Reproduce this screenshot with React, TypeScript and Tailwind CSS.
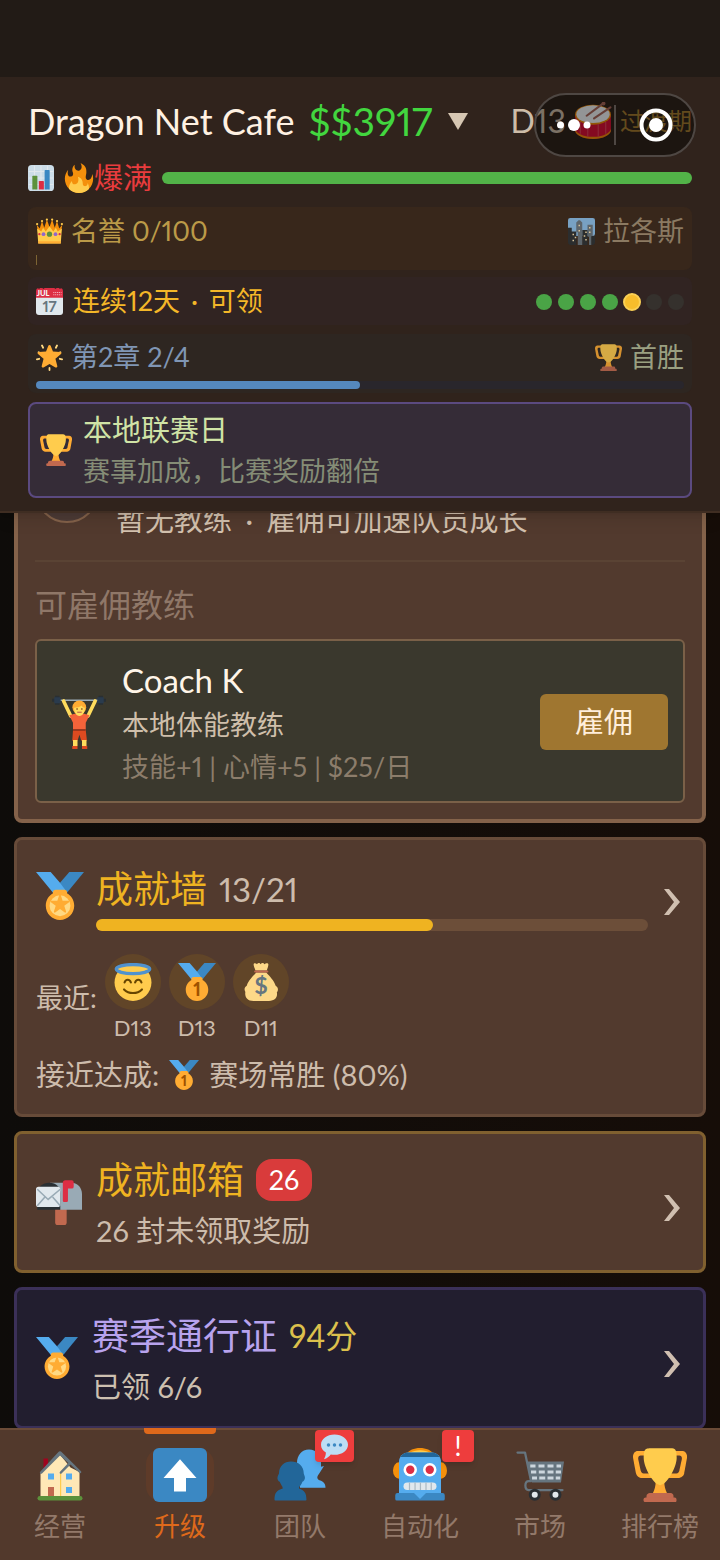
import type { ReactNode } from 'react'

interface IconProps {
  className?: string
}

function Emoji({ className, children }: IconProps & { children: ReactNode }) {
  return (
    <svg viewBox="0 0 36 36" className={`flex-shrink-0 ${className ?? ''}`} aria-hidden="true">
      {children}
    </svg>
  )
}

function ChartIcon({ className }: IconProps) {
  return (
    <Emoji className={className}>
      <rect width="36" height="36" rx="5" fill="#CCDDE8" />
      <path d="M1 9h34M1 18h34M1 27h34M9 1v34M18 1v34M27 1v34" stroke="#E1E8ED" strokeWidth="1.500" />
      <path d="M6 16a1 1 0 011-1h5a1 1 0 011 1v18H6z" fill="#5C913B" />
      <path d="M15 23a1 1 0 011-1h5a1 1 0 011 1v11h-7z" fill="#DD2E44" />
      <path d="M23 8a1 1 0 011-1h5a1 1 0 011 1v26h-7z" fill="#3B88C3" />
    </Emoji>
  )
}

function FireIcon({ className }: IconProps) {
  return (
    <Emoji className={className}>
      <path fill="#F4900C" d="M35 19c0-2.062-.367-4.039-1.04-5.868-.46 5.389-3.333 8.157-6.335 6.868-2.812-1.208-.917-5.917-.777-8.164.236-3.809-.012-8.169-6.931-11.794 2.875 5.5.333 8.917-2.333 9.125-2.958.231-5.667-2.542-4.667-7.042-3.238 2.386-3.332 6.402-2.333 9 1.042 2.708-.042 4.958-2.583 5.208-2.84.28-4.418-3.041-2.963-8.333C2.52 10.965 1 14.805 1 19c0 9.389 7.611 17 17 17s17-7.611 17-17z" />
      <path fill="#FFCC4D" d="M28.394 23.999c.148 3.084-2.561 4.293-4.019 3.709-2.106-.843-1.541-2.291-2.083-5.291s-2.625-5.083-5.708-6c2.25 6.333-1.247 8.667-3.08 9.084-1.872.426-3.753-.001-3.968-4.007C7.352 23.668 6 26.676 6 30c0 .368.023.73.055 1.09C9.125 34.124 13.342 36 18 36s8.875-1.876 11.945-4.91c.032-.36.055-.722.055-1.09 0-2.187-.584-4.236-1.606-6.001z" />
    </Emoji>
  )
}

function CrownIcon({ className }: IconProps) {
  return (
    <Emoji className={className}>
      <path fill="#F4900C" d="M3 22L1 9l4 5 3-10 3 9 3.500-11 3.500 10 3.500-10 3.500 11 3-9 3 10 4-5-2 13z" />
      <path fill="#FFCC4D" d="M3 34L1.500 14 7 18l2.500-5 3.500 5 5-7 5 7 3.500-5 2.500 5 5.500-4L33 34z" />
      <path fill="#FFAC33" d="M3 31h30v3H3z" />
      <g fill="#FFCC4D">
        <circle cx="1.500" cy="8" r="1.500" /><circle cx="8" cy="4" r="1.500" /><circle cx="14.500" cy="2" r="1.500" />
        <circle cx="21.500" cy="2" r="1.500" /><circle cx="28" cy="4" r="1.500" /><circle cx="34.500" cy="8" r="1.500" />
      </g>
      <circle cx="18" cy="21.500" r="3.500" fill="#5C913B" />
      <circle cx="10" cy="21.500" r="2.500" fill="#9266CC" />
      <circle cx="26" cy="21.500" r="2.500" fill="#9266CC" />
      <circle cx="4.500" cy="21.500" r="1.500" fill="#DD2E44" />
      <circle cx="31.500" cy="21.500" r="1.500" fill="#DD2E44" />
    </Emoji>
  )
}

function CityIcon({ className }: IconProps) {
  return (
    <Emoji className={className}>
      <rect width="36" height="24" rx="3" fill="#88C0EE" />
      <path d="M26 9h7v16h-7z" fill="#66757F" />
      <path d="M0 13h5v5h6v18H4a4 4 0 01-4-4zM19 16h7v20h-7zM31 24h5v8a4 4 0 01-4 4h-1z" fill="#292F33" />
      <path d="M11 6l3-3h2l3 3v30h-6V19h-2z" fill="#67757F" />
      <path d="M28 22h3v14h-3z" fill="#66757F" />
      <path d="M6 21h2v2H6zm3 4h2v2H9zm-3 4h2v2H6zM14 9h2v2h-2zm0 7h2v2h-2zm9 2h2v2h-2zm-2 5h2v2h-2zm2 5h2v2h-2zm5-16h2v2h-2zm0 6h2v2h-2z" fill="#FFE8B6" />
    </Emoji>
  )
}

function CalendarIcon({ className }: IconProps) {
  return (
    <Emoji className={className}>
      <path fill="#E1E8ED" d="M0 10h36v22a4 4 0 01-4 4H4a4 4 0 01-4-4z" />
      <path fill="#DD2E44" d="M36 13V4a4 4 0 00-3-3.900V1h-2V0h-4v1h-2V0H11v1H9V0H5v1H3V.1A4 4 0 000 4v9z" />
      <text x="1" y="10.500" fontSize="10" fontWeight="900" fontFamily="Lato, sans-serif" fill="#F5F8FA">JUL</text>
      <path d="M23 6h11M23 9h11" stroke="#F4ABBA" strokeWidth="1.500" strokeDasharray="1.500 1" />
      <text x="18" y="31.500" fontSize="20" fontWeight="700" fontFamily="Lato, sans-serif" fill="#66757F" textAnchor="middle">17</text>
    </Emoji>
  )
}

function GlowStarIcon({ className }: IconProps) {
  return (
    <Emoji className={className}>
      <path d="M8 2l1.500 3M28 2l-1.500 3M1.200 20.500l3-.8M34.800 20.500l-3-.8M3.500 11l1.500.8M32.500 11l-1.500.8M18 34.800V32" stroke="#FFD983" strokeWidth="2.400" strokeLinecap="round" />
      <path fill="#FFAC33" d="M18 1.200c.8 0 1.400.5 1.700 1.300l2.900 7.500 9.700.5c1.600.1 2.100 1.900 1 2.900l-7.400 6.400 2.500 9.600c.4 1.600-1.200 2.600-2.500 1.800L18 26.800l-7.900 4.400c-1.300.8-2.900-.2-2.500-1.800l2.500-9.600-7.400-6.400c-1.100-1-.6-2.800 1-2.900l9.700-.5 2.900-7.500c.3-.8.900-1.300 1.700-1.300z" />
    </Emoji>
  )
}

function TrophyIcon({ className }: IconProps) {
  return (
    <Emoji className={className}>
      <path fill="#FFAC33" d="M5.123 5h6C12.227 5 13 4.896 13 6V4c0-1.104-.773-2-1.877-2h-8c-2 0-3.583 2.125-3 5 0 0 1.791 9.375 1.917 9.958C2.373 18.500 4.164 20 6.081 20h6.958c1.105 0-.039-1.896-.039-3v-2c0 1.104-.773 2-1.877 2h-4c-1.104 0-1.833-1.042-2-2S3.539 7.667 3.539 7.667C3.206 5.750 4.018 5 5.123 5zm25.812 0h-6C23.831 5 22 4.896 22 6V4c0-1.104 1.831-2 2.935-2h8c2 0 3.584 2.125 3 5 0 0-1.633 9.419-1.771 10-.354 1.500-2.042 3-4 3h-7.146C21.914 20 22 18.104 22 17v-2c0 1.104 1.831 2 2.935 2h4c1.104 0 1.834-1.042 2-2s1.584-7.333 1.584-7.333C32.851 5.750 32.040 5 30.935 5zM20.832 22c0-6.958-2.709 0-2.709 0s-3-6.958-3 0-3.291 10-3.291 10h12.292c-.001 0-3.292-3.042-3.292-10z" />
      <path fill="#FFCC4D" d="M29.123 6.577c0 6.775-6.770 18.192-11 18.192-4.231 0-11-11.417-11-18.192 0-5.195 1-6.319 3-6.319 1.374 0 6.025-.027 8-.027l7-.001c2.917-.001 4 .684 4 6.347z" />
      <path fill="#C1694F" d="M27 33c0 1.104.227 2-.877 2h-16C9.018 35 9 34.104 9 33v-1c0-1.104 1.164-2 2.206-2h13.917c1.042 0 1.877.896 1.877 2v1z" />
      <path fill="#C1694F" d="M29 34.625c0 .760.165 1.375-1.252 1.375H8.498C7.206 36 7 35.385 7 34.625v-.250C7 33.615 7.738 33 8.498 33h19.250c.759 0 1.252.615 1.252 1.375v.250z" />
    </Emoji>
  )
}

function DrumIcon({ className }: IconProps) {
  return (
    <Emoji className={className}>
      <path fill="#DD1237" d="M1 12v15c0 4 7.600 8 17 8s17-4 17-8V12z" />
      <path d="M1 25v2c0 4 7.600 8 17 8s17-4 17-8v-2c0 4-7.600 8-17 8S1 29 1 25z" fill="#F4900C" />
      <path d="M6 19v11M13 21v12M23 21v12M30 19v11" stroke="#E8405A" strokeWidth="1.200" />
      <ellipse cx="18" cy="12" rx="17" ry="9.500" fill="#F4900C" />
      <ellipse cx="18" cy="11.500" rx="15.800" ry="8.500" fill="#F5F8FA" />
      <path d="M12 13L28 1M19 15.500L34.500 5" stroke="#AB6A5C" strokeWidth="2" strokeLinecap="round" />
      <circle cx="28" cy="1.500" r="1.800" fill="#AB6A5C" />
    </Emoji>
  )
}

function LifterIcon({ className }: IconProps) {
  return (
    <Emoji className={className}>
      <path d="M1 3.500h34" stroke="#99AAB5" strokeWidth="1" />
      <path d="M2 .5h3v6H2zM31 .5h3v6h-3zM0 2.500h2v2H0zM34 2.500h2v2h-2z" fill="#292F33" />
      <path d="M1.500 1.500h4.300v4H1.500zM30.200 1.500h4.300v4h-4.300z" fill="#2A3B4D" />
      <path d="M7.700 4L12.500 14M28.800 4L24 14" stroke="#FFDC5D" strokeWidth="2.400" strokeLinecap="round" />
      <path d="M11.500 13.500L15 12.500h6.500l3.500 1-2.500 5V24h-8.500v-5.500z" fill="#F4633A" />
      <path d="M14 23.500h8.500l.8 7h-3.800l-1.200-4-1.300 4h-3.500z" fill="#DD4A20" />
      <path d="M14 30h3v4h-3zM20 30h3v4h-3z" fill="#FFDC5D" />
      <path d="M13.500 34H17v2h-3.500zM20 34h3.500v2H20z" fill="#DD4A20" />
      <path d="M14 23.300h8.500" stroke="#662113" strokeWidth=".8" />
      <circle cx="18.200" cy="8.200" r="4.600" fill="#FFAC33" />
      <path d="M14.700 8.500c2 0 4-.5 5-1.500.5 1 1.300 1.500 2.200 1.500 0 3-1.300 5.500-3.600 5.500s-3.600-2.500-3.600-5.500z" fill="#FFDC5D" />
      <path d="M16.800 11.500h3" stroke="#C1694F" strokeWidth=".8" />
      <circle cx="16.700" cy="9.300" r=".5" fill="#662113" />
      <circle cx="19.900" cy="9.300" r=".5" fill="#662113" />
    </Emoji>
  )
}

function Ribbon() {
  return (
    <>
      <path fill="#55ACEE" d="M18 8l-7-8H0l14 17 11.521-4.750z" />
      <path fill="#3B88C3" d="M25 0l-7 8 5.390 7.312 1.227-1.489L36 0z" />
      <path fill="#FFAC33" d="M23.205 16.026c.080-.217.131-.448.131-.693 0-1.104-.896-2-2-2h-6.667c-1.105 0-2 .896-2 2 0 .245.050.476.131.693-3.258 1.826-5.464 5.307-5.464 9.307C7.335 31.224 12.111 36 18.002 36s10.667-4.776 10.667-10.667c0-4-2.206-7.481-5.464-9.307z" />
    </>
  )
}

function StarMedalIcon({ className }: IconProps) {
  return (
    <Emoji className={className}>
      <Ribbon />
      <circle cx="18" cy="25.300" r="7.800" fill="#FFD983" />
      <path fill="#FFAC33" d="M21.999 30.500c-.126 0-.250-.039-.357-.116L18 27.762l-3.642 2.622c-.213.153-.501.153-.713.001-.213-.154-.304-.429-.221-.679l1.370-4.431-3.596-2.604c-.209-.157-.297-.433-.214-.682.084-.249.314-.418.577-.420l4.443-.007 1.425-4.285c.084-.249.317-.417.571-.417s.488.168.571.417l1.400 4.276 4.468.016c.262.002.493.171.576.420.084.248-.003.524-.214.681l-3.595 2.605 1.370 4.431c.083.249-.007.524-.220.678-.108.077-.232.116-.357.116z" />
    </Emoji>
  )
}

function FirstMedalIcon({ className }: IconProps) {
  return (
    <Emoji className={className}>
      <Ribbon />
      <text x="18" y="31.500" fontSize="17" fontWeight="900" fontFamily="Lato, sans-serif" fill="#9E5200" textAnchor="middle">1</text>
    </Emoji>
  )
}

function HaloIcon({ className }: IconProps) {
  return (
    <Emoji className={className}>
      <circle cx="18" cy="18.500" r="17.500" fill="#FFCC4D" />
      <ellipse cx="18" cy="5.800" rx="15.800" ry="4.300" stroke="#5092CE" strokeWidth="3.200" fill="#FFCC4D" />
      <path d="M10 18.500c1-3.500 5-3.500 6 0M20 18.500c1-3.500 5-3.500 6 0M9.500 25c4.500 4.500 12.500 4.500 17 0" stroke="#664500" strokeWidth="2" strokeLinecap="round" fill="none" />
    </Emoji>
  )
}

function MoneyBagIcon({ className }: IconProps) {
  return (
    <Emoji className={className}>
      <path fill="#FDD888" d="M31.900 21.500c-1.700-5.300-5.900-9-8.900-12.500h-9.500C10.500 12.500 6 16.500 4.500 21.500c-2 1-2.800 3.600-1.300 6-.8 4 1.300 8.500 7.800 8.500h14.500c6 0 8.500-4 7.500-8 2-2.500.9-5.500-1.100-6.500z" />
      <path fill="#FDD888" d="M23.500 7H12.800c-.8-2-1.800-4-1.800-5.700 0-1.600 2.200-1.500 3.200 0 .8-1.700 2.600-1.700 3.400 0 1-1.700 2.800-1.700 3.600 0 1.200-1.500 3.800-1.600 3.800 0 0 1.700-.8 3.700-1.500 5.700z" />
      <path fill="#BF6952" d="M24 9H12.500a1 1 0 010-2H24a1 1 0 010 2z" />
      <text x="18" y="29.500" fontSize="22" fontWeight="700" fontFamily="Lato, sans-serif" fill="#67757F" textAnchor="middle">$</text>
    </Emoji>
  )
}

function MailboxIcon({ className }: IconProps) {
  return (
    <Emoji className={className}>
      <path fill="#C1694F" d="M15 21h9v13a2 2 0 01-2 2h-5a2 2 0 01-2-2z" />
      <path fill="#99AAB5" d="M11 3h17c4.500 0 8 4 8 9v12H19z" />
      <path fill="#292F33" d="M1 24V11c0-4.500 4-8 9.500-8S19 6.500 19 11v13z" />
      <rect y="6" width="19" height="16" rx="2" fill="#E1E8ED" />
      <path d="M1 8l8.500 8L19 8M1 21l6-7M19 21l-6-7" stroke="#99AAB5" strokeWidth="1.200" fill="none" />
      <path fill="#DD2E44" d="M21 3a2 2 0 012-2h5a1.500 1.500 0 011.500 1.500V6A1.500 1.500 0 0128 7.500h-3V17a1 1 0 01-1 1h-2a1 1 0 01-1-1z" />
    </Emoji>
  )
}

function HouseIcon({ className }: IconProps) {
  return (
    <Emoji className={className}>
      <path fill="#A0041E" d="M7 7h3v7H7z" />
      <path fill="#FFE8B6" d="M18 4.500L5 17v16h26V16l-6-3z" />
      <path fill="#FFCC4D" d="M18 16h.8v17H18z" />
      <path fill="#66757F" d="M18 2.200c.5 0 .8.200 1.200.6L32 15.500c.7.700-.3 1.800-1 1.200L25 11l-6 6c-.7.700-1.700-.4-1-1.200l5.500-5.800L18 5 6 17c-.7.700-2-.3-1.200-1.200l12-13c.4-.4.700-.6 1.200-.6z" />
      <path fill="#55ACEE" d="M10 17h4v4h-4zM22 17h4v4h-4zM22 26h4v4h-4z" />
      <path fill="#C1694F" d="M10 26h4v7h-4z" />
      <path fill="#5C913B" d="M4.500 32h27a1.500 1.500 0 010 3h-27a1.500 1.500 0 010-3z" />
    </Emoji>
  )
}

function UpArrowIcon({ className }: IconProps) {
  return (
    <Emoji className={className}>
      <rect width="36" height="36" rx="4" fill="#3B88C3" />
      <path fill="#FFF" d="M18 7.500L7 20h7v9h8v-9h7z" />
    </Emoji>
  )
}

function PeopleIcon({ className }: IconProps) {
  return (
    <Emoji className={className}>
      <path fill="#55ACEE" d="M24 1c5 0 7.500 3.500 8 8v3.500l2-.5-3.500 5.500c-1.200 1.500-1.500 3 .5 4 3 1 4 2.500 4 5H18V14l-2-4c0-5 3-9 8-9z" />
      <path fill="#269" d="M12 9C17 9 20.500 12 20.500 17l.5 1.500c.8 2-.2 3.500-1.400 4-.7 2.500-2.300 3-2.300 4.500 3.500 1 5 3 5 7.500a.5.5 0 01-.5.500H1.500a.5.500 0 01-.500-.500C1 30 2.500 28 6.500 27c0-1.500-1-2-2-4.500-1.200-.5-2-2-1.200-4L4 17c0-5 3.500-8 8-8z" />
    </Emoji>
  )
}

function RobotIcon({ className }: IconProps) {
  return (
    <Emoji className={className}>
      <ellipse cx="4" cy="15" rx="4" ry="5.500" fill="#F4900C" />
      <ellipse cx="32" cy="15" rx="4" ry="5.500" fill="#F4900C" />
      <path d="M4 9.500v11a3 5.500 0 000-11zM32 9.500a3 5.500 0 000 11z" fill="#FFAC33" />
      <path fill="#F4900C" d="M9 4c1.500-2.500 5-4 9-4s7.500 1.500 9 4z" />
      <path fill="#FFCC4D" d="M11 3.500C13 2 15.500 1.500 18 1.500s5 .5 7 2z" />
      <path fill="#55ACEE" d="M4 9c0-3 2.500-6 6-6h16c3.500 0 6 3 6 6v22H4z" />
      <path fill="#269" d="M5 6c1-2 3-3 5-3h16c2 0 4 1 5 3z" />
      <path fill="#3B88C3" d="M3 30h30a1.500 1.500 0 011.500 1.500V34a1 1 0 01-1 1h-31a1 1 0 01-1-1v-2.500A1.500 1.500 0 013 30z" />
      <path fill="#55ACEE" d="M14 30h8l-4 4z" />
      <circle cx="11.500" cy="14.500" r="4.500" fill="#FFF" /><circle cx="24.500" cy="14.500" r="4.500" fill="#FFF" />
      <circle cx="11.500" cy="14.500" r="2.800" fill="#DD2E44" /><circle cx="24.500" cy="14.500" r="2.800" fill="#DD2E44" />
      <rect x="7" y="23" width="22" height="5" rx="2.500" fill="#E1E8ED" />
      <path d="M11 23v5M14.700 23v5M18.300 23v5M22 23v5M25.500 23v5" stroke="#AAB8C2" strokeWidth=".8" />
    </Emoji>
  )
}

function CartIcon({ className }: IconProps) {
  return (
    <Emoji className={className}>
      <path d="M3 3h5l4 19H10.500c-3 0-3 6 0 6H33" stroke="#66757F" strokeWidth="1.500" fill="none" strokeLinecap="round" strokeLinejoin="round" />
      <path d="M9.500 9h24.500l-2 14H12.500z" fill="#66757F" />
      <path d="M11.500 11h3.500v2h-3.500zM17 11h4v2h-4zM23 11h4v2h-4zM29 11h3v2h-3zM12 15h3.500v2H12zM17.200 15h4v2h-4zM23 15h4v2h-4zM28.500 15h3.500v2h-3.500zM12.700 19h3.300v2h-3.300zM17.500 19h4v2h-4zM23 19h4v2h-4zM28.500 19h3v2h-3z" fill="#CCD6DD" />
      <circle cx="14.500" cy="31.200" r="4" fill="#292F33" /><circle cx="28.300" cy="31.200" r="4" fill="#292F33" />
      <circle cx="14.500" cy="31.200" r="2" fill="#E1E8ED" /><circle cx="28.300" cy="31.200" r="2" fill="#E1E8ED" />
    </Emoji>
  )
}

function SpeechIcon({ className }: IconProps) {
  return (
    <Emoji className={className}>
      <path fill="#BDDDF4" d="M18 2C8 2 0 8 0 15.500 0 20 2.500 23.500 6.500 26c0 3-1 6-2.500 9 4-1.500 7-4 9-6.500 1.500.3 3.200.5 5 .5 10 0 18-6 18-13.500S28 2 18 2z" />
      <g fill="#3B88C3"><circle cx="10" cy="16" r="2.300" /><circle cx="18" cy="16" r="2.300" /><circle cx="26" cy="16" r="2.300" /></g>
    </Emoji>
  )
}

function Chevron() {
  return (
    <svg viewBox="0 0 16 32" className="mr-1 h-8 w-4 flex-shrink-0" aria-hidden="true">
      <path d="M0 6h5l11 13L5 32H0l10-13z" fill="#d0bfb0" />
    </svg>
  )
}

// mini-program capsule floating over the title row
function Capsule() {
  return (
    <button type="button" aria-label="菜单" className="absolute right-6 top-[93px] h-16 w-[162px] cursor-pointer rounded-full border-2 border-[#4e4743] bg-black/40">
      <svg viewBox="0 0 158 60" className="h-full w-full" aria-hidden="true">
        <circle cx="24.500" cy="30" r="3.500" fill="#fff" />
        <circle cx="38" cy="30" r="6" fill="#fff" />
        <circle cx="51" cy="30" r="3.500" fill="#fff" />
        <path d="M79 10v40" stroke="#4e4743" strokeWidth="2" />
        <circle cx="120" cy="30" r="14.500" fill="none" stroke="#fff" strokeWidth="4" />
        <circle cx="120" cy="30" r="7" fill="#fff" />
      </svg>
    </button>
  )
}

const streak = ['done', 'done', 'done', 'done', 'today', 'none', 'none']

const dotStyles: Record<string, string> = {
  done: 'w-4 h-4 bg-[#4aa446]',
  today: 'w-[18px] h-[18px] -mx-px bg-[#f7bd2b] border-2 border-[#fad055]',
  none: 'w-4 h-4 bg-[#35312d]',
}

const recent = [
  { id: 'halo', Icon: HaloIcon, day: 'D13' },
  { id: 'first', Icon: FirstMedalIcon, day: 'D13' },
  { id: 'money', Icon: MoneyBagIcon, day: 'D11' },
]

const tabs = [
  { label: '经营', Icon: HouseIcon },
  { label: '升级', Icon: UpArrowIcon, active: true },
  { label: '团队', Icon: PeopleIcon, badge: 'chat' },
  { label: '自动化', Icon: RobotIcon, badge: 'alert' },
  { label: '市场', Icon: CartIcon },
  { label: '排行榜', Icon: TrophyIcon },
]

function Header() {
  return (
    <header className="relative z-10 flex-shrink-0 border-b-2 border-[#3f2d22] bg-[#30231c] shadow-lg">
      <div className="h-[77px] bg-[#221b16]" />
      <div className="px-7 pb-[13px]">
        <div className="flex h-[88px] items-center whitespace-nowrap">
          <h1 className="text-[36px] text-[#fff1e2]">Dragon Net Cafe</h1>
          <button type="button" className="ml-[14px] flex cursor-pointer items-center gap-4 text-[39px] text-[#42d63f]">
            $$3917
            <svg viewBox="0 0 20 17" className="h-[17px] w-5" aria-hidden="true">
              <path d="M0 0h20L10 17z" fill="#d6c6b2" />
            </svg>
          </button>
          <div className="ml-auto flex items-center gap-2">
            <span className="text-[32px] text-[#cdbca8]">D13</span>
            <DrumIcon className="h-[38px] w-[38px]" />
            <span className="text-2xl text-[#a67c30]">过渡期</span>
          </div>
        </div>
        <div className="mt-0.5 flex h-[22px] items-center">
          <ChartIcon className="h-[26px] w-[26px]" />
          <FireIcon className="ml-[10px] h-[30px] w-[30px]" />
          <span className="text-[29px] text-[#e93c3e]">爆满</span>
          <div className="ml-[10px] h-3 flex-1 rounded-full bg-[#52b348]" />
        </div>

        <div className="mt-[18px] rounded-lg bg-[#38271b] px-2 pb-[5px] pt-[7px] text-[27px] leading-[34px]">
          <div className="flex items-center gap-2">
            <CrownIcon className="h-[27px] w-[27px]" />
            <span className="text-[#bb9a48]">名誉 0/100</span>
            <CityIcon className="ml-auto h-[27px] w-[27px] opacity-80" />
            <span className="text-[#8b7a62]">拉各斯</span>
          </div>
          <div className="mt-[7px] h-[10px]">
            <div className="h-full w-px bg-[#7d6433]" />
          </div>
        </div>

        <div className="mt-[7px] flex h-12 items-center rounded-lg bg-[#312422] px-2 pt-px text-[27px]">
          <CalendarIcon className="h-[27px] w-[27px]" />
          <span className="ml-[10px] text-[#f4b728]">
            连续12天 <span className="mx-1">·</span> 可领
          </span>
          <div className="ml-auto flex items-center gap-[6px]">
            {streak.map((s, i) => (
              <span key={i} className={`rounded-full ${dotStyles[s]}`} />
            ))}
          </div>
        </div>

        <div className="mt-[9px] rounded-lg bg-[#2e2621] px-2 pb-1 pt-2 text-[27px] leading-[30px]">
          <div className="flex items-center gap-2">
            <GlowStarIcon className="h-[27px] w-[27px]" />
            <span className="text-[#8096b5]">第2章 2/4</span>
            <TrophyIcon className="ml-auto h-[27px] w-[27px] opacity-80" />
            <span className="text-[#9aa081]">首胜</span>
          </div>
          <div className="mt-[9px] h-2 rounded-full bg-[#29262c]">
            <div className="h-full w-1/2 rounded-full bg-[#5588bd]" />
          </div>
        </div>

        <div className="mt-[9px] flex items-center gap-[11px] rounded-lg border-2 border-[#5b4a80] bg-[#352c37] px-[10px] py-[5px] leading-[41px]">
          <TrophyIcon className="h-8 w-8" />
          <div>
            <p className="text-[29px] text-[#d0e3a6]">本地联赛日</p>
            <p className="text-[27px] text-[#858d76]">赛事加成，比赛奖励翻倍</p>
          </div>
        </div>
      </div>
      <Capsule />
    </header>
  )
}

function CoachCard() {
  return (
    <section className="rounded-lg border-4 border-[#84624a] bg-[#523a2e] px-[17px] pb-4 pt-[15px]">
      <div className="flex h-[81px] gap-[17px]">
        <div className="h-16 w-16 rounded-full border-2 border-[#84624a] bg-[#4d3b36]" />
        <p className="self-end text-[29px] leading-10 text-[#d3c1ae]">
          暂无教练 <span className="mx-1.5">·</span> 雇佣可加速队员成长
        </p>
      </div>
      <div className="mt-5 border-t-2 border-[#5a4334]" />
      <h2 className="mt-[19px] text-[32px] leading-[48px] text-[#8f7768]">可雇佣教练</h2>
      <div className="mt-[10px] flex items-center rounded-md border-2 border-[#7a6048] bg-[#3a382d] px-[15px] pb-[14px] pt-4">
        <LifterIcon className="h-[54px] w-[54px]" />
        <div className="ml-4 flex-1">
          <p className="text-[33px] leading-[46px] text-[#fff5e8]">Coach K</p>
          <p className="text-[27px] leading-[44px] text-[#cfbfab]">本地体能教练</p>
          <p className="text-[27px] leading-10 text-[#8c7d6b]">技能+1 | 心情+5 | $25/日</p>
        </div>
        <button type="button" className="h-14 w-32 cursor-pointer rounded-md bg-[#9f7630] text-[29px] text-[#ffeedb]">
          雇佣
        </button>
      </div>
    </section>
  )
}

function AchievementCard() {
  return (
    <section className="rounded-lg border-[3px] border-[#674b39] bg-[#523a2e] px-[19px] pb-[19px] pt-[26px]">
      <div className="flex items-center">
        <StarMedalIcon className="mb-1.5 h-12 w-12" />
        <div className="ml-3 mr-4 flex-1">
          <div className="flex items-center gap-3 leading-[46px]">
            <h2 className="text-[37px] text-[#efb321]">成就墙</h2>
            <span className="text-[33px] text-[#cdbcac]">13/21</span>
          </div>
          <div className="mt-[7px] h-3 rounded-full bg-[#6c4e39]">
            <div className="h-full w-[61%] rounded-full bg-[#efb321]" />
          </div>
        </div>
        <Chevron />
      </div>
      <div className="mt-[23px] flex items-center gap-2 text-[#cdbcac]">
        <span className="text-[27px]">最近:</span>
        {recent.map(({ id, Icon, day }) => (
          <div key={id} className="flex flex-col items-center">
            <div className="flex h-14 w-14 items-center justify-center rounded-full bg-[#614528]">
              <Icon className="h-[38px] w-[38px]" />
            </div>
            <span className="mt-1 text-[22px] leading-7">{day}</span>
          </div>
        ))}
      </div>
      <p className="mt-[13px] flex items-center gap-[10px] text-[29px] leading-10 text-[#cdbcac]">
        接近达成:
        <FirstMedalIcon className="h-[30px] w-[30px]" />
        赛场常胜 (80%)
      </p>
    </section>
  )
}

function MailCard() {
  return (
    <section className="flex items-center rounded-lg border-[3px] border-[#80602f] bg-[#523a2e] px-[19px] pb-[14px] pt-5">
      <MailboxIcon className="mb-1.5 h-[46px] w-[46px]" />
      <div className="ml-[14px] flex-1">
        <div className="flex items-center gap-3 leading-[52px]">
          <h2 className="text-[37px] text-[#efb321]">成就邮箱</h2>
          <span className="flex h-[42px] w-14 items-center justify-center rounded-2xl bg-[#d93b3b] text-[27px] text-white">26</span>
        </div>
        <p className="text-[29px] leading-[50px] text-[#cdbcac]">26 封未领取奖励</p>
      </div>
      <Chevron />
    </section>
  )
}

function SeasonCard() {
  return (
    <section className="flex items-center rounded-lg border-[3px] border-[#3b3058] bg-[#221e2f] px-[19px] pb-[14px] pt-5">
      <StarMedalIcon className="mb-1.5 h-[42px] w-[42px]" />
      <div className="ml-[14px] flex-1">
        <div className="flex items-center gap-3 leading-[52px]">
          <h2 className="text-[37px] text-[#b8a3ee]">赛季通行证</h2>
          <span className="text-[32px] text-[#dcc04c]">94分</span>
        </div>
        <p className="text-[29px] leading-[50px] text-[#cdc0b0]">已领 6/6</p>
      </div>
      <Chevron />
    </section>
  )
}

function TabBar() {
  return (
    <nav className="relative z-10 grid flex-shrink-0 grid-cols-6 border-t-2 border-[#6b4b37] bg-[#52392c]">
      {tabs.map(({ label, Icon, active, badge }) => (
        <button key={label} type="button" className="relative flex cursor-pointer flex-col items-center pb-4 pt-[18px]">
          {active && <span className="absolute -top-0.5 h-1.5 w-[72px] rounded-b-sm bg-[#df691b]" />}
          <span className={`flex w-[68px] justify-center rounded-2xl ${active ? 'bg-[#5e3b29]' : ''}`}>
            <Icon className="h-[54px] w-[54px]" />
          </span>
          <span className={`mt-[6px] text-[26px] leading-9 ${active ? 'text-[#df691b]' : 'text-[#93796a]'}`}>
            {label}
          </span>
          {badge === 'chat' && (
            <span className="absolute left-[75px] top-0 flex h-8 w-[39px] items-center justify-center rounded bg-[#ee3d3d] shadow-md">
              <SpeechIcon className="h-[27px] w-[27px]" />
            </span>
          )}
          {badge === 'alert' && (
            <span className="absolute left-[82px] top-0 h-8 w-8 rounded bg-[#ee3d3d] text-[26px] leading-8 text-white shadow-md">!</span>
          )}
        </button>
      ))}
    </nav>
  )
}

export default function App() {
  return (
    <div className="flex h-screen flex-col overflow-hidden bg-[#0e0b09] font-['Lato','Noto_Sans_CJK_SC',sans-serif] proportional-nums">
      <Header />
      <main className="min-h-0 flex-1 overflow-hidden bg-linear-to-r from-[#0e0c0a] to-[#160d08]">
        <div className="-mt-[73px] flex flex-col gap-[14px] px-[14px]">
          <CoachCard />
          <AchievementCard />
          <MailCard />
          <SeasonCard />
        </div>
      </main>
      <TabBar />
    </div>
  )
}
